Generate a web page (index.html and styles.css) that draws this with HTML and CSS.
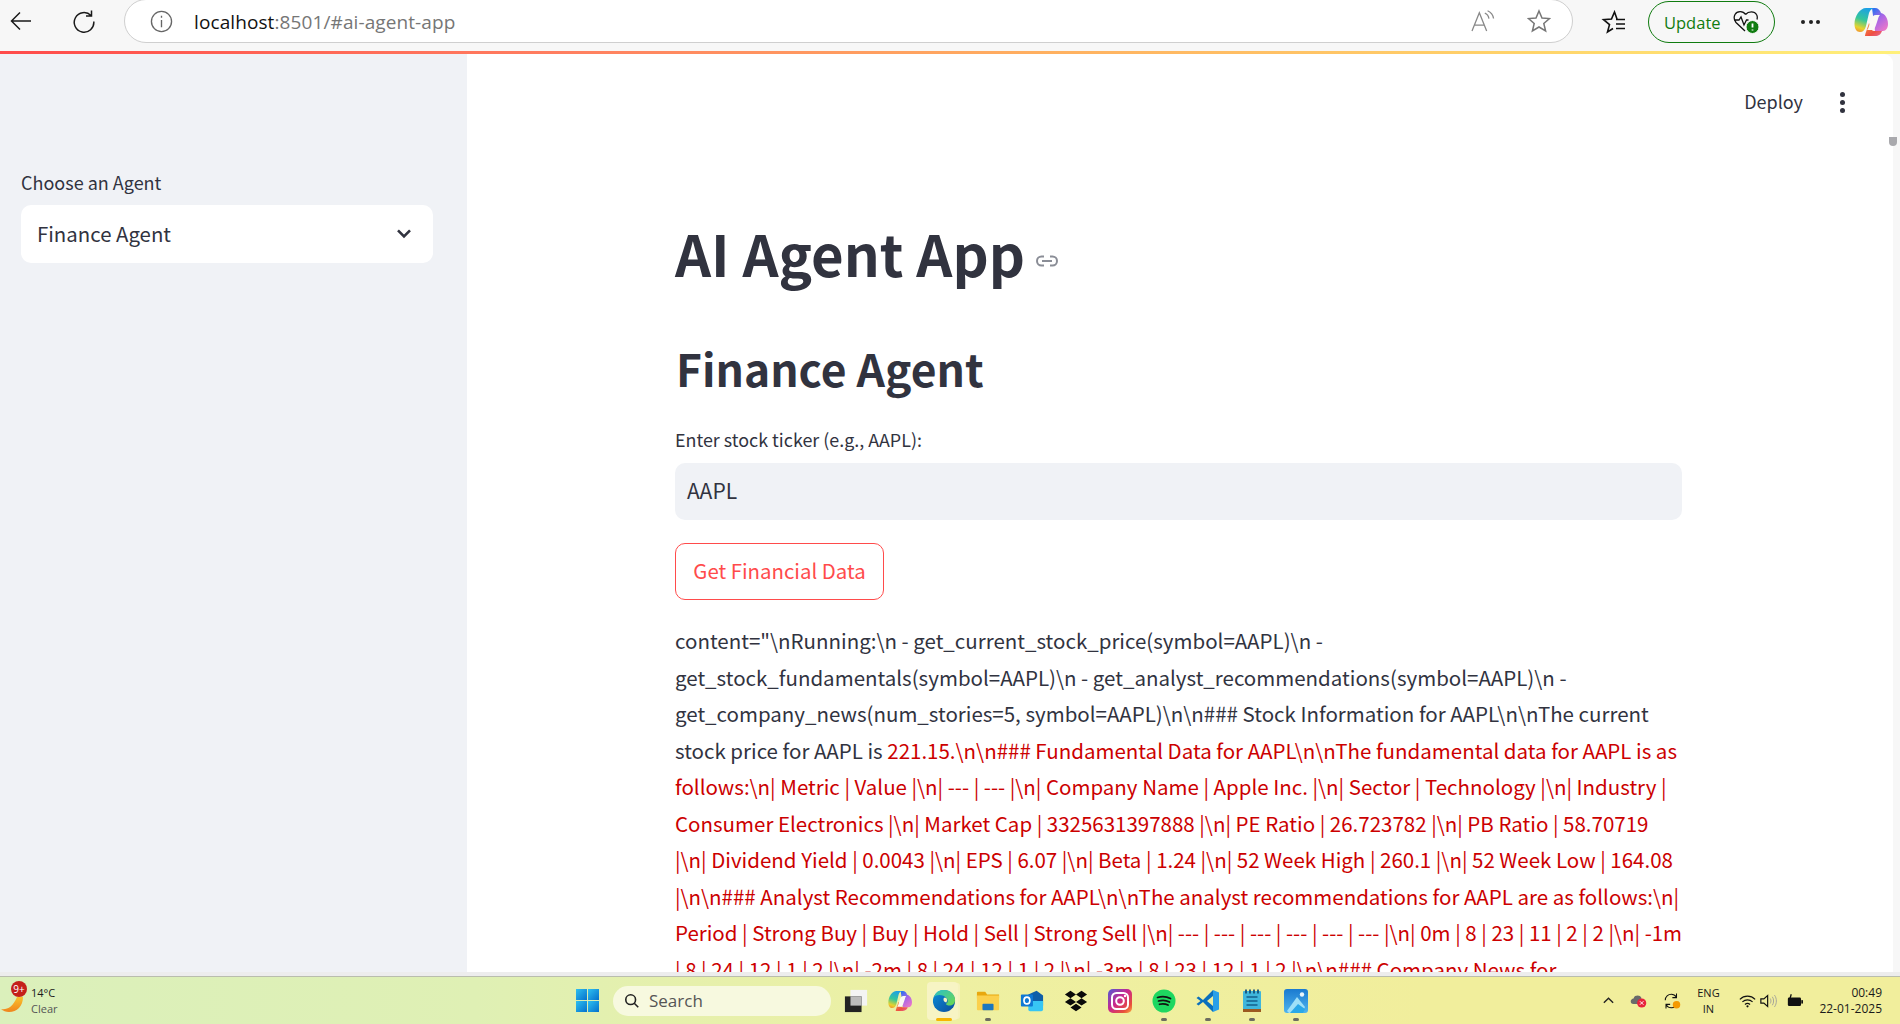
FILE: index.html
```html
<!DOCTYPE html>
<html lang="en">
<head>
<meta charset="utf-8">
<title>AI Agent App</title>
<link rel="stylesheet" href="styles.css">
</head>
<body>
<svg class="defs" width="0" height="0" aria-hidden="true">
  <defs>
    <linearGradient id="cpA" x1=".6" y1="0" x2=".3" y2="1"><stop offset="0" stop-color="#1c9fe8"/><stop offset=".5" stop-color="#35c79a"/><stop offset=".85" stop-color="#e6d42e"/><stop offset="1" stop-color="#f0a030"/></linearGradient>
    <linearGradient id="cpB" x1=".2" y1="0" x2=".8" y2="1"><stop offset="0" stop-color="#2f6ff0"/><stop offset=".45" stop-color="#a866e6"/><stop offset="1" stop-color="#ee78c8"/></linearGradient>
    <linearGradient id="cpC" x1="0" y1="0" x2="1" y2="1"><stop offset="0" stop-color="#f4a03c"/><stop offset=".6" stop-color="#ee4f42"/><stop offset="1" stop-color="#e66aa0"/></linearGradient>
    <linearGradient id="insta" x1="0" y1="0" x2="1" y2="1"><stop offset="0" stop-color="#4f5bd5"/><stop offset=".45" stop-color="#c9278f"/><stop offset=".8" stop-color="#e8503a"/><stop offset="1" stop-color="#fcb045"/></linearGradient>
    <linearGradient id="edgeB" x1="0" y1="0" x2="1" y2="1"><stop offset="0" stop-color="#0c8fd8"/><stop offset="1" stop-color="#0a4c9c"/></linearGradient>
    <linearGradient id="edgeG" x1="0" y1="0" x2="1" y2="1"><stop offset="0" stop-color="#2bc0c8"/><stop offset="1" stop-color="#6fd94a"/></linearGradient>
    <linearGradient id="photo" x1="0" y1="0" x2="0" y2="1"><stop offset="0" stop-color="#1a7ad0"/><stop offset="1" stop-color="#4fb4ee"/></linearGradient>
    <linearGradient id="win" x1="0" y1="0" x2="1" y2="1"><stop offset="0" stop-color="#2ec0f0"/><stop offset="1" stop-color="#0570cc"/></linearGradient>
    <linearGradient id="weather" x1="0" y1="0" x2="0" y2="1"><stop offset="0" stop-color="#f9c22e"/><stop offset="1" stop-color="#f0841c"/></linearGradient>
    <symbol id="copilot" viewBox="0 0 34 30">
      <path fill="url(#cpB)" d="M18 1h3c3 0 5 2 6 5 4 1 7 5 7 11 0 4-2 7-5 7h-8z"/>
      <path fill="url(#cpA)" d="M12 1h9c-3 0-5 2-6 5l-3 13c-1 4-3 6-6 6-3.500 0-5.500-3.500-5.500-8C.5 9 6 1 12 1z"/>
      <path fill="url(#cpC)" d="M11 29h10c4 0 6-2 7-5l1-1c-1 1-2 1-4 1h-5c-2 0-3-2-3-4l-2-4-3 9c-.7 2-1 3-1 4z"/>
      <path fill="#fbf9f4" d="M22 8c-3 0-4 2-5 5l-2 6c-.6 2-1 3-2 4h5c2 0 3-2 4-5l2-6c.5-2 1-3 2-4z"/>
    </symbol>
  </defs>
</svg>

<header class="toolbar">
  <svg class="tool-icon back" viewBox="0 0 24 24"><path d="M22 12H3M11 3.500 2.500 12l8.500 8.500" /></svg>
  <svg class="tool-icon reload" viewBox="0 0 24 24"><path d="M19 6.500A9.800 9.800 0 1 0 21.800 12.500M19.500 1.500v5.500H14" /></svg>
  <div class="address">
    <svg class="info" viewBox="0 0 24 24"><circle cx="12" cy="12" r="10.500"/><path d="M12 10.500V18M12 6v2"/></svg>
    <span class="url"><span class="host">localhost</span>:8501/#ai-agent-app</span>
    <svg class="read" viewBox="0 0 26 24"><path d="M1 23 9 3l8 20M3.500 16.500h11M15 3.500c2.500 1 4 3 4.500 6M18 .8c3.500 1.500 6 4.500 6.500 8.500"/></svg>
    <svg class="star" viewBox="0 0 24 24"><path d="M12 2l3 7 7.500.6-5.700 4.900 1.800 7.500L12 18l-6.600 4 1.800-7.500L1.500 9.600 9 9z"/></svg>
  </div>
  <svg class="favs" viewBox="0 0 26 24"><path d="M16 9l-2.500-7-3 7-8 .6 6 5L6.500 22 12 18.500M15 9.500h9M15 14h9M15 18.500h9"/></svg>
  <div class="update">
    <span>Update</span>
    <svg class="heart" viewBox="0 0 26 24"><path d="M12.500 4.500C10 .5 4 1 2 4.500c-1.500 3-1 5.500 1 8L12 21M12.500 4.500c3-3.500 9-3.500 11 0 1 1.500 1 3 .5 5M1 10h5l2-3 3 8 2.500-5h2"/><circle cx="19.500" cy="17" r="6.500" class="badge"/><path class="excl" d="M19.500 13.500v4M19.500 19.500v1"/></svg>
  </div>
  <div class="dots"><i></i><i></i><i></i></div>
  <svg class="copilot-big"><use href="#copilot"/></svg>
</header>

<div class="rainbow"></div>

<div class="workspace">
  <aside class="sidebar">
    <label class="side-label">Choose an Agent</label>
    <div class="select">
      <span>Finance Agent</span>
      <svg class="chevron" viewBox="0 0 14 10"><path d="M2 2l5 5 5-5"/></svg>
    </div>
  </aside>
  <main class="main">
    <div class="app-header">
      <span class="deploy">Deploy</span>
      <div class="kebab"><i></i><i></i><i></i></div>
    </div>
    <div class="column">
      <h1 class="title">AI Agent App<svg class="link" viewBox="0 0 24 12"><path d="M9 1.500H6.500a4.500 4.500 0 0 0 0 9H9M15 1.500h2.500a4.500 4.500 0 0 1 0 9H15M7 6h10"/></svg></h1>
      <h2 class="subtitle">Finance Agent</h2>
      <label class="field-label">Enter stock ticker (e.g., AAPL):</label>
      <div class="input">AAPL</div>
      <button class="btn">Get Financial Data</button>
      <p class="output">content="\nRunning:\n - get_current_stock_price(symbol=AAPL)\n - get_stock_fundamentals(symbol=AAPL)\n - get_analyst_recommendations(symbol=AAPL)\n - get_company_news(num_stories=5, symbol=AAPL)\n\n### Stock Information for AAPL\n\nThe current stock price for AAPL is <span class="err">221.15.\n\n### Fundamental Data for AAPL\n\nThe fundamental data for AAPL is as follows:\n| Metric | Value |\n| --- | --- |\n| Company Name | Apple Inc. |\n| Sector | Technology |\n| Industry | Consumer Electronics |\n| Market Cap | 3325631397888 |\n| PE Ratio | 26.723782 |\n| PB Ratio | 58.70719<br>|\n| Dividend Yield | 0.0043 |\n| EPS | 6.07 |\n| Beta | 1.24 |\n| 52 Week High | 260.1 |\n| 52 Week Low | 164.08 |\n\n### Analyst Recommendations for AAPL\n\nThe analyst recommendations for AAPL are as follows:\n| Period | Strong Buy | Buy | Hold | Sell | Strong Sell |\n| --- | --- | --- | --- | --- | --- |\n| 0m | 8 | 23 | 11 | 2 | 2 |\n| -1m | 8 | 24 | 12 | 1 | 2 |\n| -2m | 8 | 24 | 12 | 1 | 2 |\n| -3m | 8 | 23 | 12 | 1 | 2 |\n\n### Company News for<br>AAPL</span></p>
    </div>
  </main>
  <div class="scroll-thumb"></div>
</div>

<div class="gap-strip"></div>

<footer class="taskbar">
  <div class="tb-left">
    <div class="weather-icon">
      <svg class="moon" viewBox="0 0 24 18"><path fill="url(#weather)" d="M23 1c0 9-6 15-14 15-3 0-6-1-8-3 6 1 12-2 16-12z"/></svg>
      <span class="notif">9+</span>
    </div>
    <div class="weather-text"><span class="temp">14°C</span><span class="cond">Clear</span></div>
  </div>
  <div class="tb-center">
    <div class="start">
      <svg viewBox="0 0 24 24"><rect x="0" y="0" width="11.500" height="11.500" fill="url(#win)"/><rect x="12.500" y="0" width="11.500" height="11.500" fill="url(#win)"/><rect x="0" y="12.500" width="11.500" height="11.500" fill="url(#win)"/><rect x="12.500" y="12.500" width="11.500" height="11.500" fill="url(#win)"/></svg>
    </div>
    <div class="search">
      <svg viewBox="0 0 18 18"><circle cx="7.500" cy="7.500" r="5.500"/><path d="M11.500 11.500 16 16"/></svg>
      <span>Search</span>
    </div>
    <div class="slot">
      <svg viewBox="0 0 26 26"><rect x="7" y="1" width="18" height="17" fill="#f4f4f4"/><rect x="1" y="8" width="18" height="17" fill="#222"/><rect x="7" y="8" width="12" height="10" fill="#bbb"/></svg>
    </div>
    <div class="slot"><svg viewBox="0 0 34 30"><use href="#copilot"/></svg></div>
    <div class="slot active">
      <svg viewBox="0 0 26 26"><circle cx="13" cy="13" r="12" fill="url(#edgeB)"/><path fill="url(#edgeG)" d="M2 9C4 3 8 1 13 1c7 0 12 5 12 11 0 4-3 6-6 6-2 0-4-1-4-2 2-1 3-3 1-6-3-4-11-5-14-1z"/><path fill="#f6f4c0" d="M13 9.500c3-.5 4.500 2 2.500 5-1-.2-3-.5-3-2.500 0-1 0-2 .5-2.500z"/></svg>
      <i class="run-active"></i>
    </div>
    <div class="slot">
      <svg viewBox="0 0 26 24"><path fill="#e8a80f" d="M1 3q0-1 1-1h8l2 3h13v4H1z"/><path fill="#fbd04c" d="M1 6h24v15q0 1-1 1H2q-1 0-1-1z"/><rect x="7" y="15" width="12" height="7" rx="1" fill="#1d76bf"/></svg>
      <i class="run"></i>
    </div>
    <div class="slot">
      <svg viewBox="0 0 26 24"><path fill="#0f5ea8" d="M9 5l9-4 7 5v11H9z"/><path fill="#37c6f4" d="M9 12h16v9q0 2-2 2H11q-2 0-2-2z"/><rect x="1" y="5" width="13" height="13" rx="1" fill="#0f78d4"/><ellipse cx="7.500" cy="11.500" rx="3.200" ry="3.700" fill="none" stroke="#fff" stroke-width="1.800"/></svg>
    </div>
    <div class="slot">
      <svg viewBox="0 0 26 24" fill="#0a0a0a"><path d="M7 1l6 4-6 4-6-4zM19 1l6 4-6 4-6-4zM7 9l6 4-6 4-6-4zM19 9l6 4-6 4-6-4zM13 15l6 4-6 4-6-4z"/></svg>
    </div>
    <div class="slot">
      <svg viewBox="0 0 24 24"><rect x="0" y="0" width="24" height="24" rx="5" fill="url(#insta)"/><rect x="4" y="4" width="16" height="16" rx="4.500" fill="none" stroke="#fff" stroke-width="2"/><circle cx="12" cy="12" r="3.800" fill="none" stroke="#fff" stroke-width="2"/><circle cx="17" cy="7" r="1.200" fill="#fff"/></svg>
    </div>
    <div class="slot">
      <svg viewBox="0 0 24 24"><circle cx="12" cy="12" r="11.500" fill="#1ed760"/><path d="M5.500 8.500c4-1.200 9-1 13 1M6.500 12c3.500-1 8-.7 11 1M7.500 15.300c3-.8 6-.5 8.500.8" fill="none" stroke="#111" stroke-width="1.700" stroke-linecap="round"/></svg>
      <i class="run"></i>
    </div>
    <div class="slot">
      <svg viewBox="0 0 24 24"><path fill="#0a6fbd" d="M17 1 7 11 2.500 7.500 .5 9l4 3-4 3 2 1.500L7 13l10 10z"/><path fill="#2a9fe8" d="M17 1l6 2.500v17L17 23z"/><path fill="#f0ee9c" d="M17 7l-6 5 6 5z"/></svg>
      <i class="run"></i>
    </div>
    <div class="slot">
      <svg viewBox="0 0 20 24"><rect x="1" y="2" width="18" height="20" rx="1" fill="#3fb6dc"/><rect x="1" y="20" width="18" height="3" fill="#9c5a20"/><path d="M4 .5v4M8 .5v4M12 .5v4M16 .5v4" stroke="#14507a" stroke-width="1.800"/><path d="M4.500 8h11M4.500 12h11M4.500 16h11" stroke="#14608c" stroke-width="1.600"/></svg>
      <i class="run"></i>
    </div>
    <div class="slot">
      <svg viewBox="0 0 24 24"><rect width="24" height="24" rx="3" fill="url(#photo)"/><circle cx="18" cy="5.500" r="2.200" fill="#e8f4fc"/><path fill="#9fe0f8" d="M3 22 13 8l8 10-3 6H5z"/><path fill="#2aa8e8" d="M6 24l8-9 7 5-2 4z"/></svg>
      <i class="run"></i>
    </div>
  </div>
  <div class="tray">
    <svg class="t-chev" viewBox="0 0 14 9"><path d="M2 7l5-5 5 5"/></svg>
    <svg class="t-cloud" viewBox="0 0 24 20"><path fill="#6a6a6a" d="M5 15c-3 0-4-2-4-4s2-4 4-4c1-3 3-4 6-4 2 0 4 1 5 3v9z"/><circle cx="16.500" cy="13.500" r="6.500" fill="#e8233c"/><path d="M14 11l5 5M19 11l-5 5" stroke="#fff" stroke-width="1.300"/></svg>
    <svg class="t-sync" viewBox="0 0 24 24"><path class="line" d="M3 11c0-5 4-8 8-8 3 0 5 1 7 4M18 2v5.500h-5.500M20 13c-.5 4.500-4 8-9 8-3 0-5-1-7-4M4 22v-5.500h5.500"/><circle cx="18" cy="17" r="5" fill="#f59a00"/></svg>
    <div class="lang"><span>ENG</span><span>IN</span></div>
    <svg class="t-wifi" viewBox="0 0 20 16"><path class="line" d="M1 6c5-5 13-5 18 0M4 9c3.500-3 8.500-3 12 0M7 12c2-1.500 4-1.500 6 0"/><circle cx="10" cy="14.300" r="1.300" fill="#111"/></svg>
    <svg class="t-vol" viewBox="0 0 20 16"><path class="line" d="M1 5.500v5h3.500L9 14.500v-13L4.500 5.500z"/><path class="soft" d="M12 5c1.200 2 1.200 4 0 6M14.500 3c2 3 2 7 0 10M17 1c3 4 3 10 0 14"/></svg>
    <svg class="t-bat" viewBox="0 0 20 16"><rect x="1" y="4" width="15.500" height="10" rx="1.500" fill="#111"/><rect x="16.800" y="7" width="2" height="4" fill="#111"/><path d="M5 0 3.500 5" stroke="#111" stroke-width="1.500"/></svg>
    <div class="clock"><span>00:49</span><span>22-01-2025</span></div>
  </div>
</footer>
</body>
</html>
```
FILE: styles.css
```css
* { box-sizing: border-box; }
html, body { margin: 0; height: 100%; }
body {
  width: 1900px;
  height: 1024px;
  overflow: hidden;
  display: flex;
  flex-direction: column;
  background: #f7f7f7;
  color: #31333f;
  font-family: "Noto Sans CJK SC", "Source Sans Pro", "Noto Sans", sans-serif;
}
.defs { position: absolute; }

/* Browser toolbar */
.toolbar {
  height: 51px;
  flex: none;
  display: flex;
  align-items: flex-start;
  background: #f7f7f7;
  position: relative;
}
.tool-icon { fill: none; stroke: #1a1a1a; stroke-width: 1.500; margin-top: 9px; }
.back { width: 24px; height: 24px; margin-left: 9px; }
.reload { width: 24px; height: 24px; margin-left: 39px; }
.address {
  width: 1449px;
  height: 44px;
  margin-left: 28px;
  margin-top: -1px;
  background: #fff;
  border: 1.500px solid #cfcfcf;
  border-radius: 22px;
  display: flex;
  align-items: center;
  padding-left: 24px;
}
.info { width: 23px; height: 23px; fill: none; stroke: #666; stroke-width: 1.400; flex: none; margin-left: 1px; }
.url {
  margin-left: 21px;
  margin-top: 2px;
  font-family: "Open Sans", sans-serif;
  font-size: 19px;
  letter-spacing: .1px;
  color: #767676;
}
.host { color: #111; }
.read { width: 24px; height: 22px; fill: none; stroke: #888; stroke-width: 1.400; margin-left: auto; }
.star { width: 24px; height: 24px; fill: none; stroke: #777; stroke-width: 1.500; margin-left: 32px; margin-right: 21px; }
.favs { width: 26px; height: 24px; fill: none; stroke: #111; stroke-width: 1.600; margin-left: 28px; margin-top: 10px; }
.update {
  width: 127px;
  height: 42px;
  margin-left: 21px;
  margin-top: 1px;
  border: 1.500px solid #107c10;
  border-radius: 21px;
  display: flex;
  align-items: center;
  padding-left: 15px;
  color: #107c10;
  font-family: "Open Sans", sans-serif;
  font-size: 16.500px;
}
.heart { width: 26px; height: 24px; margin-left: 12px; fill: none; stroke: #111; stroke-width: 1.300; }
.heart .badge { fill: #107c10; stroke: #f7f7f7; stroke-width: 1; }
.heart .excl { stroke: #fff; stroke-width: 1.800; }
.dots { display: flex; gap: 3.500px; margin-left: 26px; margin-top: 20px; }
.dots i { width: 4px; height: 4px; border-radius: 50%; background: #222; }
.copilot-big { width: 34px; height: 30px; margin-left: 34px; margin-top: 7px; }

.rainbow {
  height: 3px;
  flex: none;
  background: linear-gradient(90deg, #ff4b4b 0%, #ff7f60 30%, #ffb060 55%, #ffd36a 80%, #fff07a 100%);
}

/* App */
.workspace {
  height: 918px;
  flex: none;
  display: flex;
  padding-right: 7px;
  position: relative;
}
.sidebar {
  width: 467px;
  flex: none;
  background: #f0f2f6;
  padding: 115px 0 0 21px;
}
.side-label { display: block; font-size: 18px; line-height: 26px; height: 36px; }
.select {
  width: 412px;
  height: 58px;
  background: #fff;
  border-radius: 10px;
  display: flex;
  align-items: center;
  justify-content: space-between;
  padding: 0 20px 3px 16px;
  font-size: 20.400px;
}
.chevron { width: 18px; height: 12px; fill: none; stroke: #31333f; stroke-width: 2.200; margin-top: 3px; }

.main {
  flex: 1;
  background: #fff;
  border-top-right-radius: 9px;
  overflow: hidden;
}
.app-header {
  height: 150px;
  display: flex;
  justify-content: flex-end;
  align-items: flex-start;
  padding: 33px 48px 0 0;
}
.deploy { font-size: 18px; line-height: 28px; }
.kebab { display: flex; flex-direction: column; gap: 3px; margin-left: 37px; margin-top: 5px; }
.kebab i { width: 5px; height: 5px; border-radius: 50%; background: #31333f; }
.column { width: 1007px; margin-left: 208px; }
.title {
  margin: 11px 0 0;
  font-size: 56.300px;
  line-height: 76px;
  font-weight: 700;
  height: 121px;
  white-space: nowrap;
}
.link { width: 24px; height: 12px; fill: none; stroke: #8a8d96; stroke-width: 2; margin-left: 10px; vertical-align: 10px; }
.subtitle {
  margin: 0 0 0 1px;
  font-size: 44.400px;
  line-height: 64px;
  font-weight: 600;
  height: 88px;
}
.field-label { display: block; font-size: 17.900px; line-height: 30px; height: 39px; }
.input {
  height: 57px;
  background: #f0f2f6;
  border-radius: 10px;
  padding: 0 0 3px 12px;
  display: flex;
  align-items: center;
  font-size: 21px;
}
.btn {
  display: block;
  width: 209px;
  height: 57px;
  margin-top: 23px;
  padding: 0 0 3px;
  background: #fff;
  border: 1px solid #ff4b4b;
  border-radius: 10px;
  color: #ff4b4b;
  font-family: inherit;
  font-size: 20.400px;
}
.output { margin: 22px -4px 0 0; font-size: 20.500px; line-height: 36.500px; }
.err { color: #cc0000; }
.scroll-thumb {
  position: absolute;
  right: 3px;
  top: 83px;
  width: 8px;
  height: 9px;
  background: #a9a9ad;
  border-radius: 0 0 4px 4px;
}

.gap-strip { height: 5px; flex: none; background: #ededed; border-bottom: 1px solid #b9bdae; }

/* Windows taskbar */
.taskbar {
  flex: 1;
  display: flex;
  align-items: center;
  background: linear-gradient(90deg, #dbf0bb 0%, #dff0b4 25%, #eef0a2 50%, #f1ee9c 75%, #f1ee9c 100%);
  font-family: "Open Sans", sans-serif;
  color: #1a1a1a;
}
.tb-left { width: 565px; flex: none; display: flex; align-items: center; }
.weather-icon { width: 31px; height: 38px; position: relative; flex: none; }
.moon { position: absolute; left: 0; top: 14px; width: 24px; height: 18px; }
.notif {
  position: absolute;
  left: 11px;
  top: -1px;
  width: 16px;
  height: 16px;
  border-radius: 50%;
  background: #c4201a;
  color: #fff;
  font-size: 10px;
  line-height: 16px;
  text-align: center;
}
.weather-text { display: flex; flex-direction: column; font-size: 11px; line-height: 16px; }
.cond { color: #555; }
.tb-center { display: flex; align-items: center; }
.start { width: 44px; display: flex; justify-content: center; }
.start svg { width: 23px; height: 23px; }
.search {
  width: 218px;
  height: 30px;
  margin-left: 4px;
  margin-right: 3px;
  border-radius: 15px;
  background: #f7f9df;
  display: flex;
  align-items: center;
  padding-left: 11px;
  color: #555;
  font-size: 17px;
}
.search svg { width: 16px; height: 16px; fill: none; stroke: #222; stroke-width: 1.800; margin-right: 9px; }
.slot {
  width: 44px;
  height: 38px;
  display: flex;
  align-items: center;
  justify-content: center;
  position: relative;
}
.slot svg { width: 24px; height: 24px; position: relative; }
.slot.active::before {
  content: "";
  position: absolute;
  inset: 0 8px 0 5px;
  background: #f7f4c4;
  border-radius: 4px;
  box-shadow: 3px 0 0 -1px #f5f2bc;
}
.run, .run-active { position: absolute; bottom: -1px; left: 50%; transform: translateX(-50%); border-radius: 2px; }
.run { width: 6px; height: 3px; background: #6c6c60; }
.run-active { width: 16px; height: 3px; background: #f7b500; }
.tray { margin-left: auto; display: flex; align-items: center; padding-right: 18px; }
.line, .soft { fill: none; stroke: #111; stroke-width: 1.400; }
.soft { stroke: #999; stroke-width: 1; }
.t-chev { width: 13px; height: 9px; fill: none; stroke: #222; stroke-width: 1.500; }
.t-cloud { width: 17px; height: 15px; margin-left: 15px; }
.t-sync { width: 18px; height: 18px; margin-left: 15.600px; }
.lang { display: flex; flex-direction: column; align-items: center; width: 34px; margin-left: 10.800px; font-size: 11px; line-height: 16px; }
.t-wifi { width: 17px; height: 14px; margin-left: 13.200px; }
.t-vol { width: 17px; height: 14px; margin-left: 4.800px; }
.t-bat { width: 17px; height: 14px; margin-left: 9.200px; }
.clock { width: 67px; margin-left: 11.400px; display: flex; flex-direction: column; align-items: flex-end; font-size: 12px; line-height: 16px; }
```
